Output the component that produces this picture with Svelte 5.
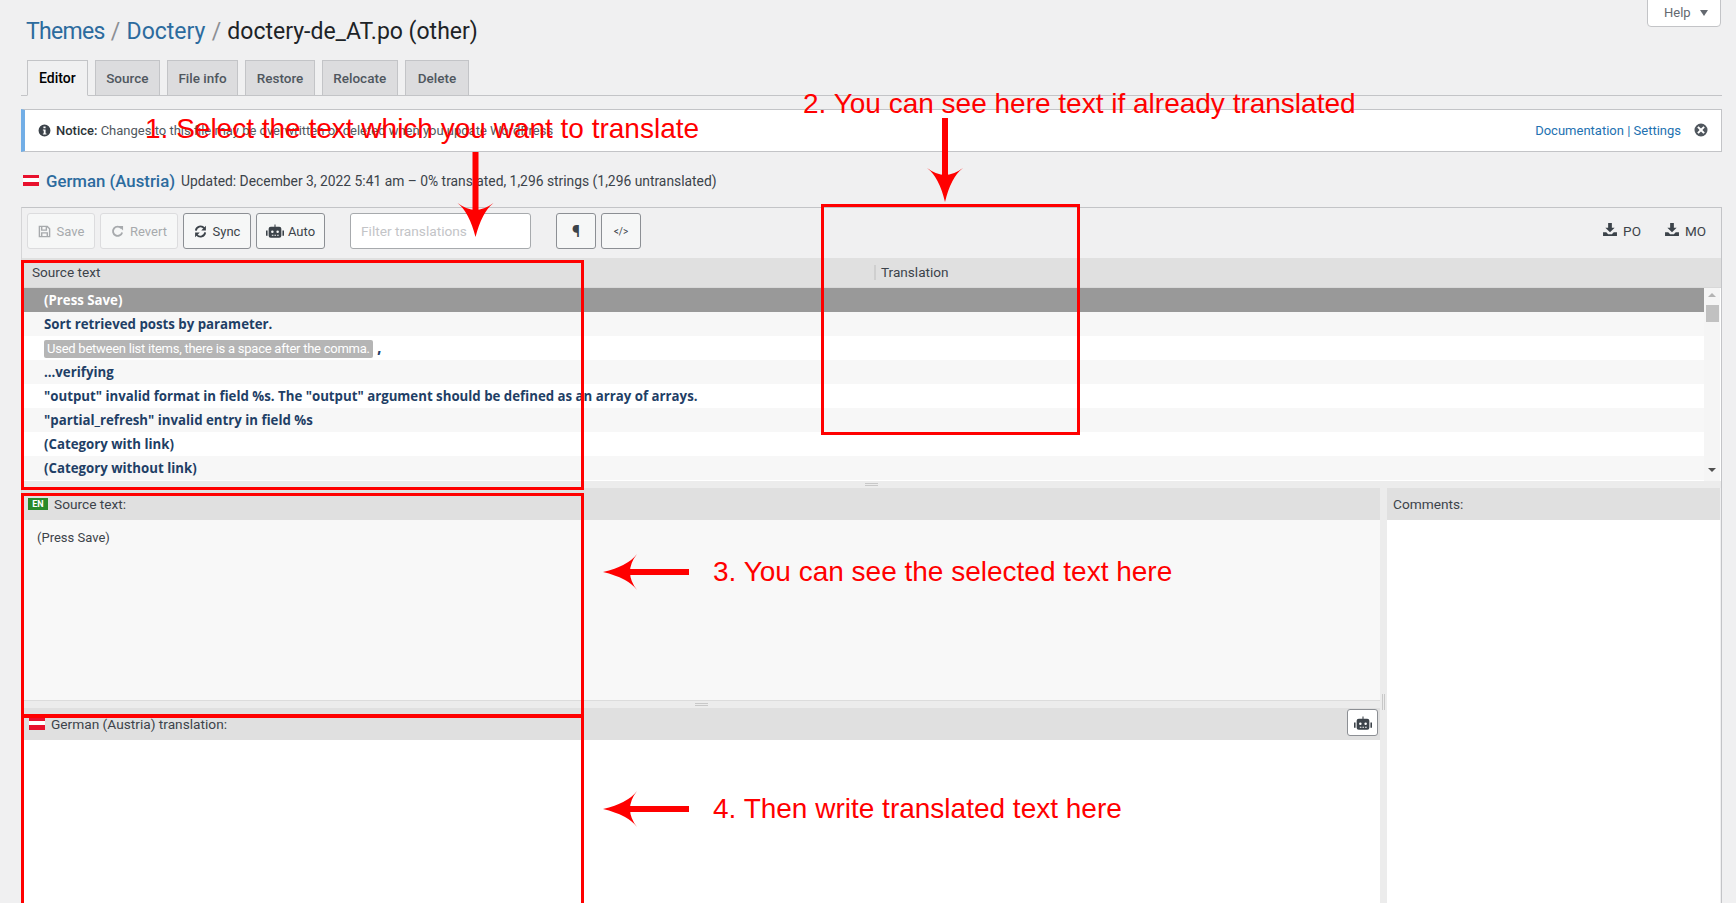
<script>
  const rows = [
    '(Press Save)',
    'Sort retrieved posts by parameter.',
    null,
    '...verifying',
    '"output" invalid format in field %s. The "output" argument should be defined as an array of arrays.',
    '"partial_refresh" invalid entry in field %s',
    '(Category with link)',
    '(Category without link)'
  ];
  const tabs = ['Source', 'File info', 'Restore', 'Relocate', 'Delete'];
  const robot = 'M8 0.5h1v2h3.5a2 2 0 0 1 2 2v6.5a2 2 0 0 1-2 2h-8a2 2 0 0 1-2-2V4.500a2 2 0 0 1 2-2H8zM6 6a1.200 1.200 0 1 0 0 2.400A1.200 1.200 0 0 0 6 6zm5 0a1.200 1.200 0 1 0 0 2.400A1.200 1.200 0 0 0 11 6zM5.500 10v1h1.500v-1zm2.500 0v1h1.500v-1zm2.500 0v1h1.500v-1zM0 6h1.500v5H0zM15.500 6H17v5h-1.500z';
  const download = 'M5.500 0h4v5h3L7.500 10l-5-5h3zM0 10h3.500l2 2h4l2-2H15v4H0zM11 11.500h1.500V13H11z';
</script>

<div class="page">
  <div class="help">Help <span class="caret"></span></div>

  <h1><a class="themes">Themes</a> <i>/</i> <a>Doctery</a> <i>/</i> <span>doctery-de_AT.po (other)</span></h1>

  <nav class="tabs">
    <div class="tab active">Editor</div>
    {#each tabs as t}<div class="tab">{t}</div>{/each}
  </nav>

  <div class="notice">
    <svg class="info" viewBox="0 0 12 12"><path fill="#3c434a" fill-rule="evenodd" d="M6 .5a5.500 5.500 0 1 0 0 11 5.500 5.500 0 0 0 0-11zM5 2.300h2v1.700H5zM4.500 5h2.500v3.800h.8v1H4.500v-1h.8V6h-.8z"/></svg>
    <b>Notice:</b>&nbsp;<span class="msg">Changes to this file may be overwritten or deleted when you update WordPress</span>
    <span class="links"><a>Documentation</a> | <a>Settings</a></span>
    <svg class="close" viewBox="0 0 14 14"><path fill="#50575e" fill-rule="evenodd" d="M7 .5a6.500 6.500 0 1 0 0 13 6.500 6.500 0 0 0 0-13zM4.600 3.200 7 5.600l2.400-2.400 1.400 1.400L8.400 7l2.400 2.400-1.400 1.400L7 8.400l-2.400 2.400-1.400-1.400L5.600 7 3.200 4.600z"/></svg>
  </div>

  <div class="lang">
    <span class="flag"></span>
    <a>German (Austria)</a>
    <span class="meta">Updated: December 3, 2022 5:41 am – 0% translated, 1,296 strings (1,296 untranslated)</span>
  </div>

  <section class="editor">
    <div class="toolbar">
      <button class="btn off w-save">
        <svg viewBox="0 0 14 14"><path fill="none" stroke="currentColor" stroke-width="1.500" d="M1.500 1.500h8.500l2.500 2.500v8.500h-11zM4 1.500v4h5v-4M4 12.500v-4h6v4"/></svg>Save
      </button>
      <button class="btn off w-revert">
        <svg viewBox="0 0 14 14"><path fill="none" stroke="currentColor" stroke-width="2" d="M11 3.500A5 5 0 1 0 12 8"/><path fill="currentColor" d="M8 1h5v5z"/></svg>Revert
      </button>
      <button class="btn w-sync">
        <svg viewBox="0 0 14 14"><path fill="none" stroke="currentColor" stroke-width="2" d="M2 6a5 5 0 0 1 9-2.500M12 8a5 5 0 0 1-9 2.500"/><path fill="currentColor" d="M12.800 .8v5h-5zM1.200 13.200v-5h5z"/></svg>Sync
      </button>
      <button class="btn w-auto">
        <svg class="wide" viewBox="0 0 17 14"><path fill="currentColor" fill-rule="evenodd" d={robot}/></svg>Auto
      </button>
      <div class="filter">Filter translations</div>
      <button class="btn sq"><b class="pil">¶</b></button>
      <button class="btn sq"><span class="code">&lt;/&gt;</span></button>
      <div class="dl">
        <span><svg viewBox="0 0 15 14"><path fill="currentColor" d={download}/></svg>PO</span>
        <span><svg viewBox="0 0 15 14"><path fill="currentColor" d={download}/></svg>MO</span>
      </div>
    </div>

    <div class="cols">
      <div class="col-a">Source text</div>
      <div class="col-b">Translation</div>
    </div>

    <div class="list">
      <div class="rows">
        {#each rows as r, i}
          <div class="row" class:sel={i === 0} class:odd={i % 2 === 1}>
            {#if r === null}
              <span class="tag">Used between list items, there is a space after the comma.</span> <b class="comma">,</b>
            {:else}
              {r}
            {/if}
          </div>
        {/each}
      </div>
      <div class="sb">
        <span class="up"></span>
        <span class="thumb"></span>
        <span class="down"></span>
      </div>
    </div>

    <div class="split-h"><span class="grip"></span></div>

    <div class="panes">
      <div class="left">
        <div class="head"><span class="en">EN</span>Source text:</div>
        <div class="source">(Press Save)</div>
        <div class="split-h2"><span class="grip"></span></div>
        <div class="head tr">
          <span class="flag small"></span>German (Austria) translation:
          <button class="btn bot"><svg class="wide" viewBox="0 0 17 14"><path fill="currentColor" fill-rule="evenodd" d={robot}/></svg></button>
        </div>
        <div class="target"></div>
      </div>
      <div class="gutter"><span class="vgrip"></span></div>
      <div class="right">
        <div class="head">Comments:</div>
        <div class="target"></div>
      </div>
    </div>
  </section>

  <!-- Red annotations drawn over the screenshot -->
  <div class="note n1">1. Select the text which you want to translate</div>
  <div class="note n2">2. You can see here text if already translated</div>
  <div class="note n3">3. You can see the selected text here</div>
  <div class="note n4">4. Then write translated text here</div>
  <div class="box b1"></div>
  <div class="box b2"></div>
  <div class="box b3"></div>
  <div class="box b4"></div>
  <svg class="arrows" viewBox="0 0 1736 903" width="1736" height="903">
    <path d="M472.500 152h6v60h-6z"/>
    <path d="M475.500 237 Q469 212 457.500 203 Q467 210 475.500 210 Q484 210 493.500 203 Q482 212 475.500 237z"/>
    <path d="M942 118h6v60h-6z"/>
    <path d="M945 202 Q939 177 927 168 Q936.500 175 945 175 Q953.500 175 963 168 Q951 177 945 202z"/>
    <path d="M625 569h64v6h-64z"/>
    <path d="M603 572 Q628 566 637 554 Q630 563 630 572 Q630 581 637 590 Q628 578 603 572z"/>
    <path d="M625 806h64v6h-64z"/>
    <path d="M603 809 Q628 803 637 791 Q630 800 630 809 Q630 818 637 827 Q628 815 603 809z"/>
  </svg>
</div>

<style>
  :global(body) { margin: 0; background: #f0f0f1; overflow: hidden; }
  .page {
    position: relative;
    height: 903px;
    overflow: hidden;
    padding: 0 14px 0 21px;
    box-sizing: border-box;
    display: flex;
    flex-direction: column;
    font: 13px/18px Roboto, sans-serif;
    color: #3c434a;
  }
  a { color: #2271b1; }
  .help {
    position: absolute; right: 15px; top: -1px;
    width: 74px; height: 28px; box-sizing: border-box;
    background: #fff; border: 1px solid #c3c4c7; border-radius: 0 0 4px 4px;
    color: #646970; padding: 4px 0 0 16px;
  }
  .caret {
    display: inline-block; margin-left: 6px; vertical-align: 1px;
    border: 4px solid transparent; border-top: 6px solid #646970; border-bottom: 0;
  }
  h1 {
    margin: 0; padding: 18px 0 0 5px; height: 42px; box-sizing: content-box;
    font-size: 23px; line-height: 28px; font-weight: 400; color: #1d2327;
  }
  h1 a { color: #2c6b9e; }
  h1 .themes { letter-spacing: -0.7px; }
  h1 i { font-style: normal; color: #8c8f94; margin: 0 0.5px; }
  .tabs {
    display: flex; gap: 7px; padding-left: 6px; height: 36px; box-sizing: border-box;
    border-bottom: 1px solid #c3c4c7;
  }
  .tab {
    height: 36px; box-sizing: border-box; padding: 8px 10.5px 0;
    background: #dcdcde; border: 1px solid #c3c4c7; color: #50575e; font-weight: 500;
    font-size: 13.5px;
  }
  .tab:last-child { padding: 8px 12px 0; }
  .tab.active { background: #f0f0f1; border-bottom-color: #f0f0f1; color: #000; font-size: 14px; padding: 8px 11px 0; }
  .notice {
    display: flex; align-items: center; height: 43px; box-sizing: border-box;
    margin-top: 13px; padding: 0 13px 0 13px;
    background: #fff; border: 1px solid #c3c4c7; border-left: 4px solid #72aee6;
  }
  .info { width: 13px; height: 13px; margin-right: 5px; }
  .notice b { font-weight: 500; color: #2c3338; }
  .msg { color: #50575e; }
  .links { margin-left: auto; color: #2271b1; margin-right: 13px; }
  .close { width: 14px; height: 14px; margin-top: -2px; }
  .lang {
    display: flex; align-items: center; height: 55px; padding: 2px 0 0 2px; box-sizing: border-box;
  }
  .lang a { font-size: 16.8px; color: #2c6b9e; margin: 0 6px 0 7px; font-weight: 500; }
  .meta { font-size: 13.85px; }
  .flag {
    width: 16px; height: 11px; display: inline-block;
    background: linear-gradient(#e8112d 0 3.500px, #fff 3.500px 7.500px, #e8112d 7.500px);
    flex: none;
  }
  .editor {
    flex: 1; min-height: 0; display: flex; flex-direction: column;
    border: 1px solid #c3c4c7; border-bottom: 0; border-left-color: #d5d5d7;
    box-sizing: border-box;
  }
  .toolbar {
    display: flex; align-items: flex-start; gap: 5px; height: 50px; flex: none;
    padding: 5px 15px 0 5px; box-sizing: border-box;
  }
  .btn {
    display: inline-flex; align-items: center; justify-content: center; gap: 6px;
    height: 36px; padding: 1px 0 0; box-sizing: border-box;
    background: #f6f7f7; border: 1px solid #8c8f94; border-radius: 3px;
    font: 13px Roboto, sans-serif; color: #3c434a;
  }
  .btn svg { width: 13px; height: 13px; }
  .btn svg.wide { width: 18px; height: 15px; }
  .btn.off { border-color: #dcdcde; color: #a7aaad; }
  .w-save { width: 68px; }
  .w-revert { width: 78px; }
  .w-sync { width: 68px; }
  .w-auto { width: 69px; gap: 4px; }
  .filter {
    width: 181px; height: 36px; box-sizing: border-box; margin: 0 20px 0 20px;
    background: #fff; border: 1px solid #a7aaad; border-radius: 3px;
    padding: 8px 10px; color: #c3c4c7; font-size: 13.7px;
  }
  .sq { width: 40px; }
  .pil { font-size: 16px; }
  .code { font-size: 10px; }
  .dl { margin-left: auto; display: flex; gap: 24px; color: #3c434a; height: 35px; align-items: center; font-size: 13.5px; }
  .dl span { display: inline-flex; align-items: center; gap: 6px; }
  .dl svg { width: 14px; height: 13px; margin-top: -2px; }
  .cols {
    display: flex; height: 30px; flex: none; align-items: center;
    background: #e0e0e0; border-bottom: 1px solid #d8d8d8; box-sizing: border-box;
    font-size: 13.6px;
  }
  .col-a { width: 852px; padding-left: 10px; box-sizing: border-box; margin-top: -1px; }
  .col-b { border-left: 2px solid #cfcfcf; padding-left: 5px; line-height: 15px; }
  .list { display: flex; height: 193px; flex: none; background: #fff; }
  .rows { flex: 1; min-width: 0; }
  .row {
    height: 24px; line-height: 25px; padding-left: 22px; background: #fff;
    color: #1f3f66; font-family: "Open Sans", sans-serif; font-weight: 700; white-space: nowrap; font-size: 13.25px;
  }
  .row.odd { background: #f7f7f7; }
  .row.sel { background: #999; color: #fff; }
  .tag {
    display: inline-block; height: 18px; line-height: 18px; padding: 0 3px;
    background: #b5b5b5; color: #fff; font-weight: 400; border-radius: 2px;
    font-family: Roboto, sans-serif; font-size: 13px; letter-spacing: -0.25px;
  }
  .comma { margin-left: 1px; }
  .sb { width: 16px; background: #f5f5f5; position: relative; margin-right: 1px; }
  .thumb { position: absolute; left: 2px; top: 17px; width: 13px; height: 17px; background: #c1c1c1; }
  .up, .down {
    position: absolute; left: 4px; border: 4px solid transparent;
  }
  .up { top: 5px; border-bottom: 4px solid #b4b4b4; border-top: 0; }
  .down { top: 180px; border-top: 4px solid #505050; border-bottom: 0; }
  .split-h { height: 7px; flex: none; background: #ececec; position: relative; display: flex; justify-content: center; align-items: center; }
  .grip { width: 13px; height: 3px; border-top: 1px solid #c8c8c8; border-bottom: 1px solid #c8c8c8; box-sizing: border-box; }
  .panes { flex: 1; min-height: 0; display: flex; }
  .left { width: 1358px; display: flex; flex-direction: column; background: #fff; }
  .gutter { width: 7px; background: #ececec; position: relative; }
  .vgrip {
    position: absolute; left: 2px; top: 206px; width: 3px; height: 16px; box-sizing: border-box;
    border-left: 1px solid #c8c8c8; border-right: 1px solid #c8c8c8;
  }
  .right { flex: 1; margin-right: 1px; display: flex; flex-direction: column; }
  .head {
    height: 32px; flex: none; box-sizing: border-box; display: flex; align-items: center;
    padding: 0 6px 1px; background: #e0e0e0; color: #3c434a; font-size: 13.7px;
  }
  .en {
    width: 20px; height: 12px; line-height: 12px; text-align: center; font-size: 9px; font-weight: 700;
    color: #fff; background: #2a8a2a; margin: 0 6px 0 0;
  }
  .source {
    height: 181px; flex: none; box-sizing: border-box; padding: 9px 15px 0; line-height: 18px;
    background: #f8f8f8; border-bottom: 1px solid #dcdcdc;
  }
  .split-h2 { height: 7px; flex: none; background: #ececec; display: flex; align-items: center; justify-content: center; }
  .head.tr { padding: 0 2px 1px 6px; }
  .flag.small { margin: 0 6px 0 1px; height: 12px; }
  .bot { margin-left: auto; width: 31px; height: 27px; background: #fff; margin-top: -2px; }
  .target { flex: 1; background: #fff; }

  .note {
    position: absolute; font: 28px/34px "Liberation Sans", Arial, sans-serif;
    color: #f00; white-space: nowrap;
  }
  .n1 { left: 145px; top: 112px; }
  .n2 { left: 803px; top: 87px; }
  .n3 { left: 713px; top: 555px; }
  .n4 { left: 713px; top: 792px; }
  .box { position: absolute; border: 3px solid #f00; box-sizing: border-box; }
  .b1 { left: 21px; top: 260px; width: 563px; height: 230px; }
  .b2 { left: 21px; top: 493px; width: 563px; height: 225px; }
  .b3 { left: 21px; top: 714px; width: 563px; height: 300px; }
  .b4 { left: 821px; top: 204px; width: 259px; height: 231px; }
  .arrows { position: absolute; left: 0; top: 0; fill: #f00; pointer-events: none; }
</style>
